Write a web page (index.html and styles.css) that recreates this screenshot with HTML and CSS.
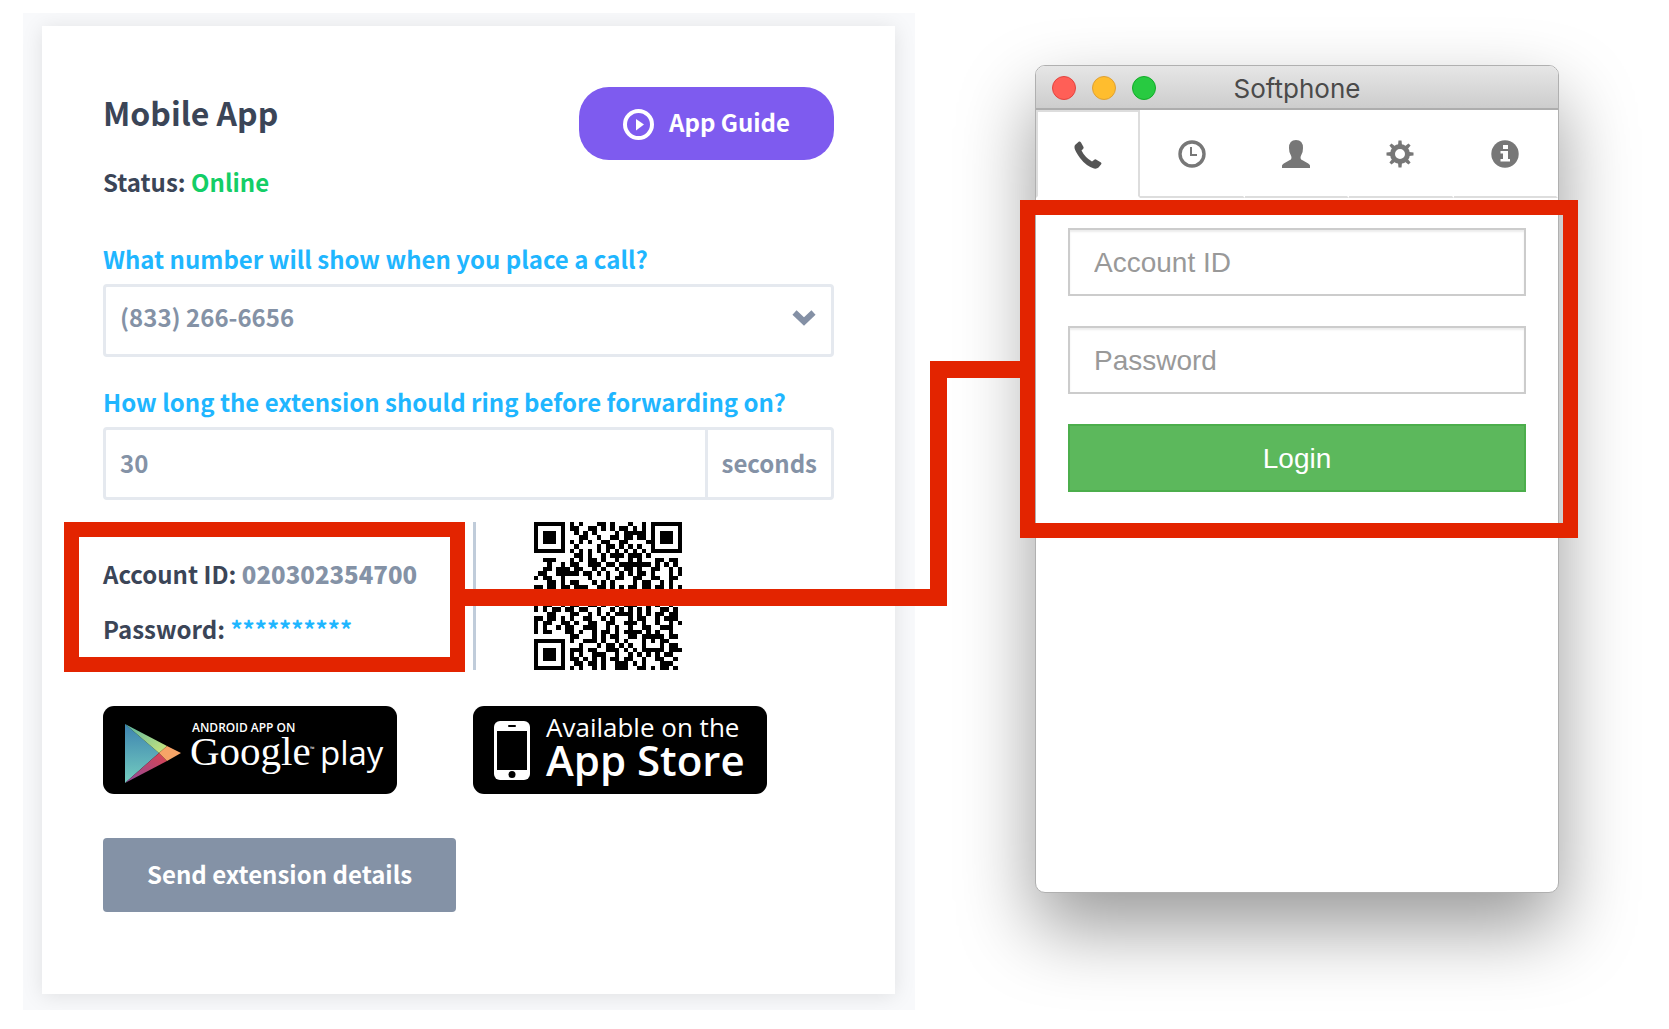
FILE: index.html
```html
<!doctype html>
<html lang="en">
<head>
<meta charset="utf-8">
<meta name="viewport" content="width=device-width, initial-scale=1">
<title>Mobile App</title>
<link rel="stylesheet" href="styles.css">
</head>

<body>
<div class="page">

	<div class="panel">
		<div class="card">
			<div class="cardTop">
				<h1>Mobile App</h1>
				<button type="button" class="guide">
					<svg width="31" height="31" viewBox="0 0 31 31"><circle cx="15.500" cy="15.500" r="13.500" fill="none" stroke="#fff" stroke-width="4"/><path d="M13 10 L21 15.500 L13 21.500 Z" fill="#fff"/></svg>
					<span>App Guide</span>
				</button>
			</div>
			<p class="status">Status: <span class="online">Online</span></p>

			<label for="number">What number will show when you place a call?</label>
			<div class="selectBox">
				<select id="number">
					<option>(833) 266-6656</option>
				</select>
				<svg class="arrow" width="24" height="16" viewBox="0 0 24 16"><path d="M2.500 2.500 L12 11.500 L21.500 2.500" fill="none" stroke="#8490a5" stroke-width="6"/></svg>
			</div>

			<label for="ring">How long the extension should ring before forwarding on?</label>
			<div class="ringBox">
				<input type="text" id="ring" value="30">
				<span class="unit">seconds</span>
			</div>

			<div class="details">
				<div class="credentials">
					<p>Account ID: <span class="account">020302354700</span></p>
					<p>Password: <a href="#" class="stars">**********</a></p>
				</div>
				<svg id="qr" width="148" height="148" viewBox="0 0 33 33" shape-rendering="crispEdges"></svg>
			</div>

			<div class="stores">
				<a href="#" class="store">
					<svg width="294" height="88" viewBox="0 0 294 88">
						<defs>
							<linearGradient id="blue" x1="0" y1="0" x2="0" y2="1"><stop offset="0" stop-color="#3d83b0"/><stop offset="1" stop-color="#74cdbf"/></linearGradient>
							<linearGradient id="green" x1="0" y1="0" x2="1" y2="1"><stop offset="0" stop-color="#57b3a0"/><stop offset="1" stop-color="#cde87c"/></linearGradient>
							<linearGradient id="red" x1="1" y1="0" x2="0" y2="1"><stop offset="0" stop-color="#dc4450"/><stop offset="1" stop-color="#8c4a9c"/></linearGradient>
						</defs>
						<path d="M22 18 L56 47 L22 77 Z" fill="url(#blue)"/>
						<path d="M22 18 L64 40 L56 47 Z" fill="url(#green)"/>
						<path d="M22 77 L56 47 L64 55 Z" fill="url(#red)"/>
						<path d="M64 40 L78 47 L64 55 L56 47 Z" fill="#f6a467"/>
						<text x="89" y="26" class="android">ANDROID APP ON</text>
						<text x="87" y="59" class="google">Google</text>
						<text x="207" y="45" class="tm">™</text>
						<text x="217" y="59" class="play">play</text>
					</svg>
				</a>
				<a href="#" class="store">
					<svg width="294" height="88" viewBox="0 0 294 88">
						<rect x="21" y="15" width="36" height="59" rx="6" fill="#fff"/>
						<rect x="24" y="25" width="30" height="39" fill="#000"/>
						<rect x="35" y="19" width="8" height="2" rx="1" fill="#000"/>
						<circle cx="39" cy="68.500" r="3.500" fill="#000"/>
						<text x="73" y="31" class="available">Available on the</text>
						<text x="73" y="70" class="appStore">App Store</text>
					</svg>
				</a>
			</div>

			<button type="button" class="send">Send extension details</button>
		</div>
	</div>

	<div class="window">
		<div class="titleBar">
			<span class="lights"><i class="close"></i><i class="min"></i><i class="max"></i></span>
			Softphone
		</div>
		<nav class="tabs">
			<a href="#" class="active" title="Phone"><svg width="28" height="28" viewBox="0 0 28 28"><path d="M1 4 L5 0.500 Q6 0 7 1.500 L9.500 6 Q10 7 9 8 L7.500 9.500 Q11 16.500 18 20.500 L20 19 Q21 18 22 18.500 L27 21.500 Q28 22.300 27 23.500 L24.500 26.500 Q23 28 20 27.500 Q12 25 6 17 Q1 10 0.500 7 Q0.300 5 1 4 Z"/></svg></a>
			<a href="#" title="History"><svg width="28" height="28" viewBox="0 0 28 28"><circle cx="14" cy="14" r="12" fill="none" stroke="#777" stroke-width="3.400"/><path d="M12 7 H14 V14 H19 V16 H12 Z"/></svg></a>
			<a href="#" title="Contacts"><svg width="28" height="28" viewBox="0 0 28 28"><path d="M14 0 Q21 0 21 8 Q21 12 19.500 14.500 Q18.500 16 18.500 18 Q18.500 19.500 21 20.500 Q28 24 28 25.500 V28 H0 V25.500 Q0 24 7 20.500 Q9.500 19.500 9.500 18 Q9.500 16 8.500 14.500 Q7 12 7 8 Q7 0 14 0 Z"/></svg></a>
			<a href="#" title="Settings"><svg width="28" height="28" viewBox="0 0 28 28"><circle cx="14" cy="14" r="7.500" fill="none" stroke="#777" stroke-width="5"/><path id="tooth" d="M12 5 L12.500 0.500 H15.500 L16 5 Z"/><use href="#tooth" transform="rotate(45 14 14)"/><use href="#tooth" transform="rotate(90 14 14)"/><use href="#tooth" transform="rotate(135 14 14)"/><use href="#tooth" transform="rotate(180 14 14)"/><use href="#tooth" transform="rotate(225 14 14)"/><use href="#tooth" transform="rotate(270 14 14)"/><use href="#tooth" transform="rotate(315 14 14)"/></svg></a>
			<a href="#" title="About"><svg width="28" height="28" viewBox="0 0 28 28"><circle cx="14" cy="14" r="13.700"/><path fill="#fff" d="M12 5 H17 V9 H12 Z M9.500 11 H17 V19 H19 V21.500 H9.500 V19 H12 V13.500 H9.500 Z"/></svg></a>
		</nav>
		<form class="login">
			<input type="text" placeholder="Account ID" aria-label="Account ID">
			<input type="password" placeholder="Password" aria-label="Password">
			<button type="button">Login</button>
		</form>
	</div>

	<!-- line from the credentials to the login form -->
	<div class="lineLow"></div>
	<div class="lineHigh"></div>
</div>

<script src="script.js"></script>
</body>
</html>
```
FILE: styles.css
```css
* {
	box-sizing: border-box;
}

body {
	margin: 0;
	background: #fff;
	color: #3b4557;
	font-family: "Noto Sans CJK SC", "Open Sans", sans-serif;
	font-size: 24px;
	line-height: 38px;
	font-weight: bold;
}

h1, p {
	margin: 0;
}

a {
	text-decoration: none;
}

svg {
	display: block;
}

input, select, button {
	font: inherit;
	border-radius: 0;
	outline: none;
}

.page {
	position: relative;
	display: grid;
	grid-template-columns: 892fr 524fr;
	column-gap: 120px;
	align-items: start;
	padding: 13px 110px 19px 23px;
}

/* left side */

.panel {
	background: #f8f9fb;
	padding: 13px 20px 16px 19px;
	overflow: hidden;
}

.card {
	background: #fff;
	padding: 61px 61px 82px;
	box-shadow: 0 2px 20px rgba(0, 0, 0, 0.1);
}

.cardTop {
	display: flex;
	justify-content: space-between;
	align-items: flex-start;
}

h1 {
	font-size: 32px;
	line-height: 50px;
}

.guide {
	display: flex;
	align-items: center;
	gap: 15px;
	height: 73px;
	padding: 0 44px;
	border: 0;
	border-radius: 30px;
	background: #7e5bef;
	color: #fff;
}

.guide span {
	padding-bottom: 4px;
}

.guide svg {
	margin-top: 2px;
}

.status {
	margin: 3px 0 39px;
}

.online {
	color: #13ce66;
}

label {
	display: block;
	margin-bottom: 6px;
	color: #1fb6ff;
}

.selectBox {
	position: relative;
	margin-bottom: 26px;
}

.selectBox select {
	appearance: none;
	display: block;
	width: 100%;
	height: 73px;
	padding: 0 14px 8px;
	border: 3px solid #e5e9ef;
	border-radius: 4px;
	background: #fff;
	color: #8492a6;
}

.arrow {
	position: absolute;
	right: 18px;
	top: 26px;
	pointer-events: none;
}

.ringBox {
	display: flex;
	height: 73px;
	border: 3px solid #e5e9ef;
	border-radius: 4px;
	color: #8492a6;
}

.ringBox input {
	flex: 1;
	min-width: 0;
	padding: 0 14px 2px;
	border: 0;
	background: none;
	color: #8492a6;
}

.unit {
	display: flex;
	align-items: center;
	padding: 0 14px 2px;
	border-left: 3px solid #e5e9ef;
}

.details {
	display: flex;
	gap: 58px;
	margin-top: 22px;
}

.credentials {
	position: relative;
	width: 373px;
	padding-top: 33px;
	border-right: 3px solid #c0ccda;
}

.credentials p + p {
	margin-top: 17px;
}

.account {
	color: #8492a6;
	font-weight: 900;
}

.stars {
	color: #1fb6ff;
}

.stores {
	display: flex;
	gap: 76px;
	margin-top: 36px;
}

.store {
	width: 294px;
	height: 88px;
	border-radius: 11px;
	background: #000;
}

.store text {
	fill: #fff;
	font-family: "Open Sans", sans-serif;
	font-weight: normal;
}

.store .android {
	font-size: 12px;
	font-weight: 600;
}

.store .google {
	font-family: "Liberation Serif", serif;
	font-size: 41px;
}

.store .tm {
	font-size: 6px;
}

.store .play {
	font-size: 33px;
}

.store .available {
	font-size: 26px;
	font-weight: 500;
}

.store .appStore {
	font-size: 42px;
	font-weight: 600;
}

.send {
	display: block;
	margin-top: 44px;
	height: 74px;
	padding: 0 44px 2px;
	border: 0;
	border-radius: 4px;
	background: #8492a6;
	color: #fff;
}

/* softphone window */

.window {
	margin-top: 52px;
	min-height: 828px;
	border: 1px solid #b0b0b0;
	border-radius: 10px;
	background: #fff;
	box-shadow: 0 35px 76px rgba(0, 0, 0, 0.4);
	font-family: "Liberation Sans", Arial, sans-serif;
	font-weight: normal;
}

.titleBar {
	position: relative;
	height: 44px;
	border-bottom: 2px solid #adadad;
	border-radius: 9px 9px 0 0;
	background: linear-gradient(#e6e6e6, #cdcdcd);
	color: #4a4a4a;
	font-family: Inter, sans-serif;
	font-size: 26px;
	line-height: 46px;
	text-align: center;
}

.lights {
	position: absolute;
	left: 16px;
	top: 10px;
	display: flex;
	gap: 16px;
}

.lights i {
	width: 24px;
	height: 24px;
	border: 1px solid #e2443f;
	border-radius: 50%;
	background: #ff5f57;
}

.lights .min {
	border-color: #dea035;
	background: #ffbd2e;
}

.lights .max {
	border-color: #12ac28;
	background: #28ca41;
}

.tabs {
	display: grid;
	grid-template-columns: repeat(5, 1fr);
	height: 88px;
}

.tabs a {
	display: flex;
	align-items: center;
	justify-content: center;
	padding-top: 2px;
	border-bottom: 2px solid #ddd;
	border-right: 2px solid transparent;
	fill: #777;
}

.tabs .active {
	border: 2px solid #ddd;
	border-bottom-color: #fff;
	fill: #555;
}

.login {
	position: relative;
	display: flex;
	flex-direction: column;
	gap: 30px;
	padding: 30px 32px 46px;
}

.login input {
	height: 68px;
	padding: 2px 24px 0;
	border: 2px solid #ccc;
	box-shadow: inset 0 2px 2px rgba(0, 0, 0, 0.075);
	font-size: 28px;
}

.login input::placeholder {
	color: #999;
	opacity: 1;
}

.login button {
	height: 68px;
	padding: 2px 0 0;
	border: 2px solid #4cae4c;
	background: #5cb85c;
	color: #fff;
	font-size: 28px;
}

/* red marks drawn over the page */

.credentials::after, .login::after {
	content: "";
	position: absolute;
	border: 15px solid #e32400;
	pointer-events: none;
}

.credentials::after {
	top: 0;
	bottom: -2px;
	left: -39px;
	right: 8px;
}

.login::after {
	top: 2px;
	bottom: 0;
	left: -16px;
	right: -20px;
}

.lineLow, .lineHigh {
	position: absolute;
	pointer-events: none;
}

.lineLow {
	top: 589px;
	left: 464px;
	width: 483px;
	height: 17px;
	background: #e32400;
}

.lineHigh {
	top: 361px;
	left: 930px;
	width: 91px;
	height: 245px;
	border: solid #e32400;
	border-width: 17px 0 0 17px;
}
```
FILE: script.js
```js
// one string per row, # = dark
var rows = [
	"####### # #   ## #   #  # #######",
	"#     # ##  ## # # ## # # #     #",
	"# ### #  # # #    # ##### # ### #",
	"# ### #   ##  #  ## ## ## # ### #",
	"# ### # # # #  ##  ##    ## ### #",
	"#     #  #    # ## # # #  #     #",
	"####### # # # # # # # # # #######",
	"         ## #  # ### ### #       ",
	"  ###   # # ## #  #  # #   ## ## ",
	"   #  # ##  ### ## ####### # # # ",
	"  ## ### ##  # #  # ## #  ##  # #",
	" ##  ##### ## # #  # # ## #   # #",
	"# ##  #     #   # ##  ##  ##  ## ",
	"   ## # ##   # # #    # ##  # #  ",
	"## ## ## ###  ## # # ## ## ## # #",
	" ## # # # # # # # # # # # # # # #",
	"# #  ## #  # ##  # #  # #  ## #  ",
	" # ##   # ##   # ## #  ## #  # # ",
	"# ##  # ##  ## #  # ###  # #  #  ",
	"# # ## ## ##  #  # # # # #  ## # ",
	"   ##   ##  # # # #### # # ## ## ",
	"## ## # #  ##  # #   # ##  # ### ",
	"# ##  ## #  ##  ##  ### #  #  # #",
	"# #  # ##  ###  # #  #  ##  ###  ",
	"# ##   ## #  # ## # #### # #  #  ",
	"        ##   # # ##  ## ##### ## ",
	"####### #  ### #  # #   # # ##   ",
	"#     #   #   # ## # #  #   # ## ",
	"# ### # ### ##  ### # # ##### ###",
	"# ### # # #  ###  #  # # # # ##  ",
	"# ### # ## # # # ## ##  #  ##  # ",
	"#     #  ## ## #  ### # #   ###  ",
	"####### # #  # #  ###  ## # ## # "
];
var path = "";
for (var y = 0; y < rows.length; y++) {
	for (var x = 0; x < rows[y].length; x++) {
		if (rows[y][x] == "#") {
			path += "M" + x + " " + y + "h1v1h-1z";
		}
	}
}
document.getElementById("qr").innerHTML = '<path d="' + path + '"/>';
```
